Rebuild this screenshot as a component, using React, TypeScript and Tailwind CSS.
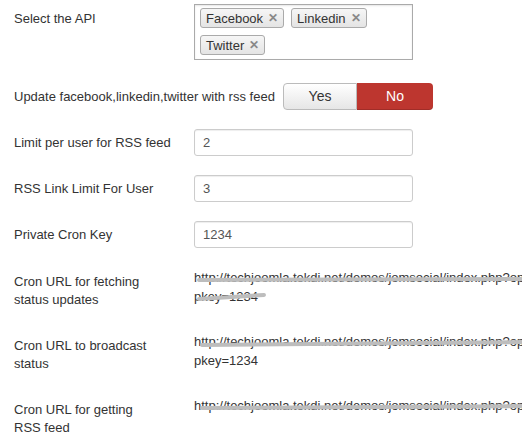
import { ReactNode } from 'react'

const font = { fontFamily: '"Liberation Sans", Arial, sans-serif' }

const Tag = ({ name }: { name: string }) => (
  <span className="inline-flex items-center h-[20px] px-[5px] gap-[5px] rounded-[3px] border border-[#aaa] bg-gradient-to-b from-[#f6f6f6] to-[#e4e4e4] text-[13px] text-[#333] leading-none">
    {name}
    <span className="text-[#888] text-[12px] font-bold">✕</span>
  </span>
)

const Row = ({ label, children, className = '', labelClass = '' }: { label: ReactNode; children: ReactNode; className?: string; labelClass?: string }) => (
  <div className={`flex items-center ${className}`}>
    <div className={`w-[180px] shrink-0 text-[13px] leading-[18px] text-[#333] ${labelClass}`}>{label}</div>
    {children}
  </div>
)

const TextBox = ({ value }: { value: string }) => (
  <div className="w-[219px] h-[27px] flex items-center px-[8px] border border-[#ccc] rounded-[3px] shadow-[inset_0_1px_1px_rgba(0,0,0,0.07)] text-[13px] text-[#555]">
    {value}
  </div>
)

type Stroke = { y: number; x: number; w: number; tilt: number }

// grey marker strokes drawn over the urls
const Scribble = ({ lines }: { lines: Stroke[] }) => (
  <svg className="absolute left-0 top-0 pointer-events-none" width="340" height="40">
    {lines.map((l, i) => (
      <path
        key={i}
        d={`M${l.x} ${l.y + l.tilt} L${l.w} ${l.y}`}
        stroke="#bdbdbd"
        strokeWidth="4"
        strokeLinecap="round"
        fill="none"
      />
    ))}
  </svg>
)

const CronUrl = ({ withKey, scribble }: { withKey: boolean; scribble: Stroke[] }) => (
  <div className="relative w-[328px] overflow-hidden text-[13px] leading-[19px] text-[#333] whitespace-nowrap">
    <div>http://techjoomla.tekdi.net/demos/jomsocial/index.php?op</div>
    {withKey && <div>pkey=1234</div>}
    <Scribble lines={scribble} />
  </div>
)

export default function App() {
  return (
    <div className="w-[522px] h-[438px] overflow-hidden bg-white" style={font}>
      <div className="pl-[14px] pt-[4px] flex flex-col">
        <Row label="Select the API" className="!items-start" labelClass="pt-[6px]">
          <div className="w-[219px] h-[56px] border border-[#aaa] shadow-[inset_0_1px_2px_rgba(0,0,0,0.1)] px-[5px] pt-[3px] flex flex-wrap content-start gap-x-[7px] gap-y-[7px]">
            <Tag name="Facebook" />
            <Tag name="Linkedin" />
            <Tag name="Twitter" />
          </div>
        </Row>
        <div className="mt-[23px] flex items-center">
          <div className="w-[269px] text-[13px] text-[#333]">Update facebook,linkedin,twitter with rss feed</div>
          <div className="flex h-[27px] text-[14px]">
            <div className="w-[74px] flex items-center justify-center border border-[#bbb] rounded-l-[4px] bg-gradient-to-b from-white to-[#e6e6e6] text-[#333]">Yes</div>
            <div className="w-[76px] flex items-center justify-center rounded-r-[4px] bg-[#bd362f] text-white shadow-[inset_0_-1px_0_rgba(0,0,0,0.15)]">No</div>
          </div>
        </div>
        <Row label="Limit per user for RSS feed" className="mt-[19px]">
          <TextBox value="2" />
        </Row>
        <Row label="RSS Link Limit For User" className="mt-[19px]">
          <TextBox value="3" />
        </Row>
        <Row label="Private Cron Key" className="mt-[19px]">
          <TextBox value="1234" />
        </Row>
        <Row label={<>Cron URL for fetching<br />status updates</>} className="mt-[25px] !items-start">
          <div className="-mt-[5px]">
            <CronUrl withKey scribble={[{ x: 5, y: 11, w: 340, tilt: 1 }, { x: 5, y: 27, w: 70, tilt: 4 }]} />
          </div>
        </Row>
        <Row label={<>Cron URL to broadcast<br />status</>} className="mt-[28px] !items-start">
          <div className="-mt-[5px]">
            <CronUrl withKey scribble={[{ x: 8, y: 10, w: 340, tilt: 3 }]} />
          </div>
        </Row>
        <Row label={<>Cron URL for getting<br />RSS feed</>} className="mt-[28px] !items-start">
          <div className="-mt-[5px]">
            <CronUrl withKey={false} scribble={[{ x: 8, y: 10, w: 340, tilt: 2 }]} />
          </div>
        </Row>
      </div>
    </div>
  )
}
